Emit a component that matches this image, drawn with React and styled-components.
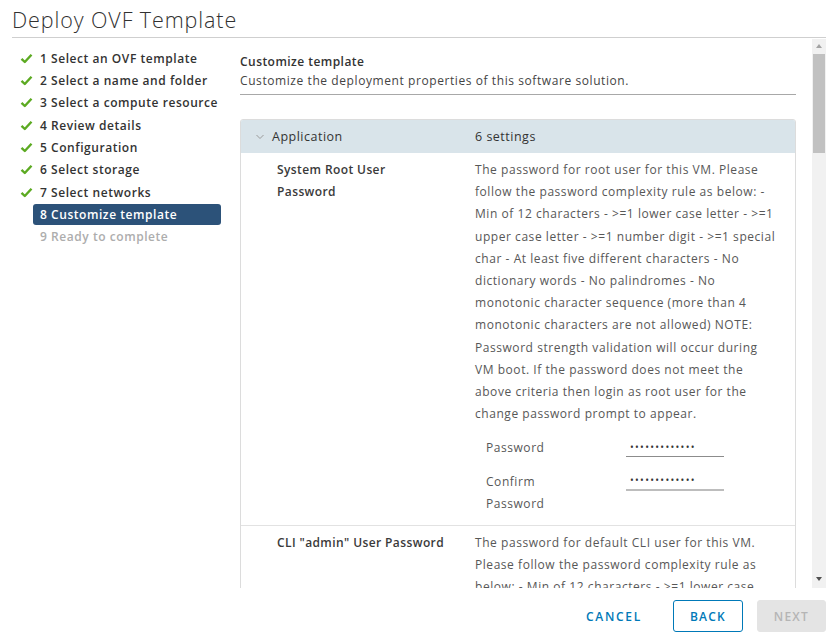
import styled, { createGlobalStyle } from "styled-components";

const steps = [
    { label: "1 Select an OVF template", state: "done" },
    { label: "2 Select a name and folder", state: "done" },
    { label: "3 Select a compute resource", state: "done" },
    { label: "4 Review details", state: "done" },
    { label: "5 Configuration", state: "done" },
    { label: "6 Select storage", state: "done" },
    { label: "7 Select networks", state: "done" },
    { label: "8 Customize template", state: "active" },
    { label: "9 Ready to complete", state: "todo" },
];

const rootHelp = [
    "The password for root user for this VM. Please",
    "follow the password complexity rule as below: -",
    "Min of 12 characters - >=1 lower case letter - >=1",
    "upper case letter - >=1 number digit - >=1 special",
    "char - At least five different characters - No",
    "dictionary words - No palindromes - No",
    "monotonic character sequence (more than 4",
    "monotonic characters are not allowed) NOTE:",
    "Password strength validation will occur during",
    "VM boot. If the password does not meet the",
    "above criteria then login as root user for the",
    "change password prompt to appear.",
];

const cliHelp = [
    "The password for default CLI user for this VM.",
    "Please follow the password complexity rule as",
    "below: - Min of 12 characters - >=1 lower case",
];

const GlobalStyle = createGlobalStyle`
    body {
        margin: 0;
        background: #fff;
        font-family: "Open Sans", "Liberation Sans", sans-serif;
        color: #333;
    }
    * {
        box-sizing: border-box;
    }
`;

function Check() {
    return (
        <svg width="13" height="11" viewBox="0 0 13 11">
            <path d="M1.5 5.8 L4.8 9 L11.5 1.8" fill="none" stroke="#5caa22" strokeWidth="2.4" strokeLinejoin="round" />
        </svg>
    );
}

function Chevron() {
    return (
        <svg width="8" height="6" viewBox="0 0 8 6">
            <path d="M0.5 1 L4 4.5 L7.5 1" fill="none" stroke="#9a9a9a" strokeWidth="1" />
        </svg>
    );
}

function TextLines({ lines }) {
    return lines.map((line, i) => <Line key={i}>{line}</Line>);
}

export default function App() {
    return (
        <Page>
            <GlobalStyle />
            <Header>
                <Title>Deploy OVF Template</Title>
            </Header>
            <Body>
                <Nav>
                    {steps.map((step) => (
                        <NavItem key={step.label}>
                            <IconSlot>{step.state === "done" && <Check />}</IconSlot>
                            <NavLabel $state={step.state}>{step.label}</NavLabel>
                        </NavItem>
                    ))}
                </Nav>
                <Pane>
                    <Intro>
                        <SectionTitle>Customize template</SectionTitle>
                        <SectionText>Customize the deployment properties of this software solution.</SectionText>
                    </Intro>
                    <Card>
                        <CardHeader>
                            <HeaderName>
                                <Chevron />
                                <span>Application</span>
                            </HeaderName>
                            <span>6 settings</span>
                        </CardHeader>
                        <SettingRow>
                            <SettingLabel>
                                <Line>System Root User</Line>
                                <Line>Password</Line>
                            </SettingLabel>
                            <SettingHelp>
                                <TextLines lines={rootHelp} />
                                <SubForm>
                                    <SubLabel>Password</SubLabel>
                                    <PassInput type="password" defaultValue="aaaaaaaaaaaaa" />
                                    <SubLabel>
                                        <Line>Confirm</Line>
                                        <Line>Password</Line>
                                    </SubLabel>
                                    <PassInput type="password" defaultValue="aaaaaaaaaaaaa" $soft />
                                </SubForm>
                            </SettingHelp>
                        </SettingRow>
                        <SettingRow $divider>
                            <SettingLabel>
                                <Line>CLI "admin" User Password</Line>
                            </SettingLabel>
                            <SettingHelp>
                                <TextLines lines={cliHelp} />
                            </SettingHelp>
                        </SettingRow>
                    </Card>
                </Pane>
                <Scrollbar>
                    <ScrollArrow $up />
                    <Thumb />
                    <ScrollGap />
                    <ScrollArrow />
                </Scrollbar>
            </Body>
            <Footer>
                <FlatButton>Cancel</FlatButton>
                <OutlineButton>Back</OutlineButton>
                <DisabledButton disabled>Next</DisabledButton>
            </Footer>
        </Page>
    );
}

const Page = styled.div`
    width: 832px;
    height: 641px;
    overflow: hidden;
    display: flex;
    flex-direction: column;
`;
const Header = styled.header`
    height: 38px;
    margin: 0 6px 0 12px;
    border-bottom: 1px solid #cfcfcf;
    flex-shrink: 0;
`;
const Title = styled.h1`
    margin: 0;
    font-size: 21.5px;
    font-weight: 300;
    line-height: 39px;
    color: #313131;
    letter-spacing: 0.9px;
`;
const Body = styled.div`
    height: 550px;
    display: flex;
    flex-shrink: 0;
`;
const Nav = styled.nav`
    width: 228px;
    padding: 9px 0 0 20px;
    flex-shrink: 0;
`;
const NavItem = styled.div`
    height: 22.33px;
    display: flex;
    align-items: center;
`;
const IconSlot = styled.span`
    width: 13px;
    display: flex;
    align-items: center;
`;
const NavLabel = styled.span`
    width: 188px;
    height: 21px;
    padding: 0 7px;
    border-radius: 3px;
    font-size: 12px;
    font-weight: 600;
    line-height: 21px;
    letter-spacing: 0.55px;
    white-space: nowrap;
    background: ${(p) => (p.$state === "active" ? "#2c5279" : "transparent")};
    color: ${(p) => (p.$state === "active" ? "#fff" : p.$state === "todo" ? "#adadad" : "#333")};
`;
const Pane = styled.main`
    flex: 1;
    overflow: hidden;
    padding: 14px 16px 0 12px;
`;
const Intro = styled.div`
    border-bottom: 1px solid #a8a8a8;
    padding-bottom: 4px;
`;
const SectionTitle = styled.div`
    font-size: 12px;
    font-weight: 600;
    line-height: 19px;
    letter-spacing: 0.45px;
    color: #333;
`;
const SectionText = styled.div`
    font-size: 12px;
    line-height: 19px;
    letter-spacing: 0.58px;
    color: #444;
`;
const Card = styled.section`
    margin-top: 24px;
    border: 1px solid #dcdcdc;
    border-radius: 3px;
    overflow: hidden;
`;
const CardHeader = styled.div`
    height: 33px;
    display: grid;
    grid-template-columns: 234px 1fr;
    align-items: center;
    background: #d9e4ea;
    font-size: 12.5px;
    letter-spacing: 0.5px;
    color: #333;
`;
const HeaderName = styled.div`
    display: flex;
    align-items: center;
    gap: 8px;
    padding-left: 15px;
`;
const SettingRow = styled.div`
    display: grid;
    grid-template-columns: 234px 1fr;
    padding: 6px 0 10px;
    border-top: ${(p) => (p.$divider ? "1px solid #e2e2e2" : "none")};
    font-size: 12px;
    line-height: 22.2px;
    letter-spacing: 0.55px;
`;
const SettingLabel = styled.div`
    padding-left: 36px;
    font-weight: 600;
    letter-spacing: 0.4px;
    color: #3a3a3a;
`;
const SettingHelp = styled.div`
    color: #575757;
`;
const Line = styled.div`
    white-space: nowrap;
`;
const SubForm = styled.div`
    margin-top: 12px;
    padding-left: 11px;
    display: grid;
    grid-template-columns: 140px 98px;
    row-gap: 11px;
    align-items: start;
`;
const SubLabel = styled.div`
    color: #575757;
`;
const PassInput = styled.input`
    width: 98px;
    height: 20px;
    padding: 0 4px;
    border: none;
    border-bottom: ${(p) => (p.$soft ? "2px solid #bdbdbd" : "1px solid #8c8c8c")};
    font-family: "Open Sans", sans-serif;
    font-size: 10px;
    letter-spacing: 1.3px;
    color: #333;
    outline: none;
    background: transparent;
`;
const Scrollbar = styled.div`
    width: 14px;
    margin: 1px 6px 0 0;
    background: #f1f1f1;
    display: flex;
    flex-direction: column;
    align-items: center;
    flex-shrink: 0;
`;
const ScrollArrow = styled.div`
    width: 0;
    height: 0;
    margin: ${(p) => (p.$up ? "5px 0 6px" : "0 0 7px")};
    border-left: 3.5px solid transparent;
    border-right: 3.5px solid transparent;
    border-top: ${(p) => (p.$up ? "none" : "4px solid #505050")};
    border-bottom: ${(p) => (p.$up ? "4px solid #a3a3a3" : "none")};
`;
const Thumb = styled.div`
    width: 12px;
    height: 99px;
    background: #c1c1c1;
`;
const ScrollGap = styled.div`
    flex: 1;
`;
const Footer = styled.footer`
    flex: 1;
    display: flex;
    justify-content: flex-end;
    align-items: flex-start;
    gap: 14px;
    padding: 12px 6px 0 0;
`;
const BaseButton = styled.button`
    height: 32px;
    padding: 0 16px;
    border-radius: 3px;
    font-family: "Open Sans", sans-serif;
    font-size: 12px;
    font-weight: 600;
    letter-spacing: 1.2px;
    text-transform: uppercase;
    cursor: pointer;
`;
const FlatButton = styled(BaseButton)`
    border: 1px solid transparent;
    background: transparent;
    color: #0079b8;
    letter-spacing: 1.7px;
`;
const OutlineButton = styled(BaseButton)`
    border: 1px solid #0079b8;
    background: #fff;
    color: #0079b8;
`;
const DisabledButton = styled(BaseButton)`
    border: 1px solid #e4e4e4;
    background: #e4e4e4;
    color: #b5b5b5;
    cursor: not-allowed;
`;
